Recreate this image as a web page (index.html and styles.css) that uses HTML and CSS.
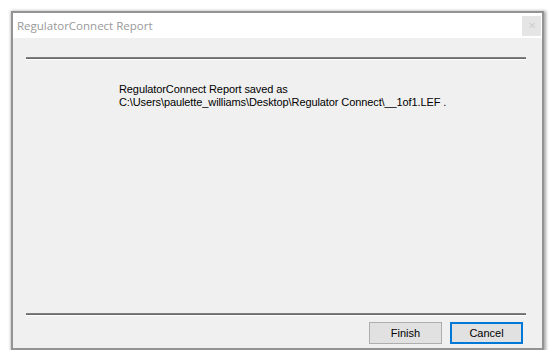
FILE: index.html
```html
<!DOCTYPE html>
<html lang="en">
<head>
    <meta charset="UTF-8">
    <title>RegulatorConnect Report</title>
    <link rel="stylesheet" href="styles.css">
</head>
<body>

    <div class="window">
        <!-- Title bar -->
        <div class="titlebar">
            <span class="title">RegulatorConnect Report</span>
            <div class="close-box">&#x2715;</div>
        </div>

        <div class="content">
            <div class="rule"></div>

            <div class="message">
                <div>RegulatorConnect Report saved as</div>
                <div>C:\Users\paulette_williams\Desktop\Regulator Connect\__1of1.LEF .</div>
            </div>

            <div class="spacer"></div>

            <div class="rule"></div>

            <div class="button-row">
                <button class="button">Finish</button>
                <button class="button button-default">Cancel</button>
            </div>
        </div>
    </div>

</body>
</html>
```

FILE: styles.css
```css
body {
    margin: 0;
    background-color: #fff;
    font-family: 'Liberation Sans', Arial, sans-serif;
}

.window {
    margin: 11px 0 0 11px;
    width: 529px;
    height: 335px;
    display: flex;
    flex-direction: column;
    border: 2px solid #939393;
    box-shadow: 1px 1px 3px 1px rgba(0, 0, 0, 0.35);
}

.titlebar {
    height: 25px;
    background-color: #fff;
    display: flex;
    align-items: center;
    justify-content: space-between;
    padding: 0 1px 0 4px;
}

.title {
    font-family: 'Open Sans', sans-serif;
    font-size: 11.5px;
    color: #999;
}

.close-box {
    width: 19px;
    height: 20px;
    background-color: #e5e5e5;
    color: #cfcfcf;
    font-size: 10px;
    display: flex;
    align-items: center;
    justify-content: center;
}

.content {
    flex: 1;
    background-color: #f0f0f0;
    display: flex;
    flex-direction: column;
    padding: 19px 16px 4px 13px;
}

.rule {
    height: 1px;
    background-color: #6a6a6a;
    border-top: 1px solid #808080;
    border-bottom: 1px solid #fff;
}

.message {
    margin: 23px 0 0 93px;
    font-size: 11px;
    line-height: 13px;
    letter-spacing: -0.1px;
    color: #000;
}

.spacer {
    flex: 1;
}

.button-row {
    display: flex;
    justify-content: flex-end;
    gap: 8px;
    margin-top: 6px;
    padding-right: 3px;
}

.button {
    width: 73px;
    height: 22px;
    font-family: 'Liberation Sans', Arial, sans-serif;
    font-size: 11px;
    color: #000;
    background-color: #e1e1e1;
    border: 1px solid #adadad;
    padding: 0;
}

.button-default {
    border: 2px solid #0078d7;
}
```
